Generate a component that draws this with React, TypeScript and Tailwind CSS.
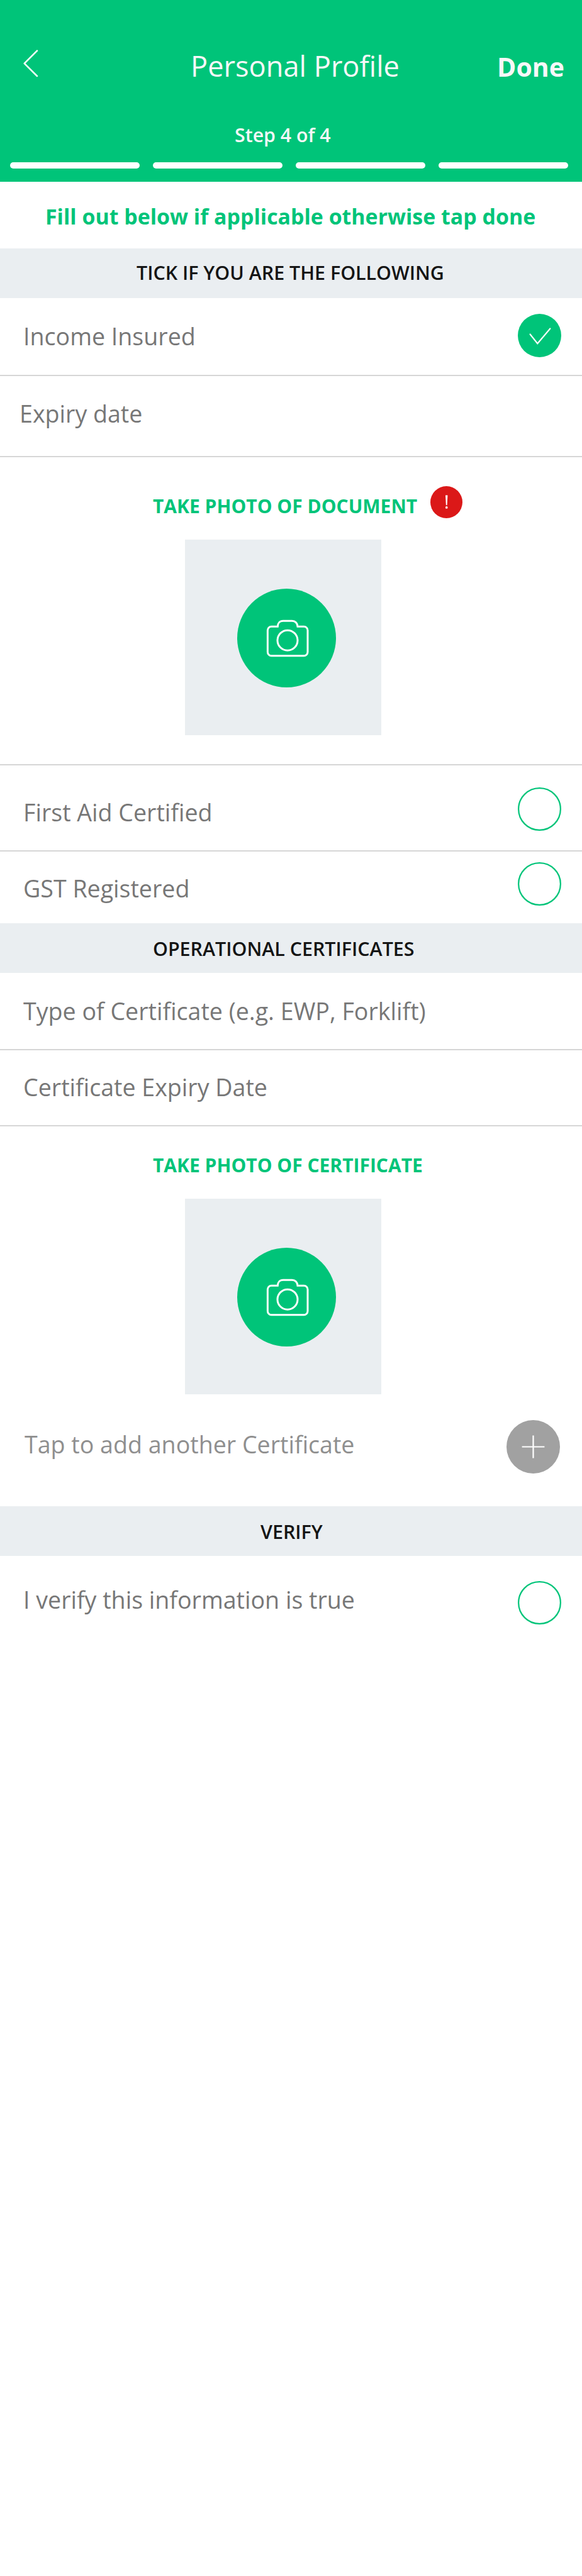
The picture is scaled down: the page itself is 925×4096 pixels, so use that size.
import React from "react";

const CameraIcon = () => (
  <svg className="h-[157px] w-[157px]" viewBox="0 0 211 211" fill="none">
    <circle cx="105.5" cy="105.5" r="105.5" fill="#00c479" />
    <g stroke="#fff" strokeWidth="4">
      <path d="M88 81H73a8 8 0 0 0-8 8V135.500a8 8 0 0 0 8 8H142.500a8 8 0 0 0 8-8V89a8 8 0 0 0-8-8H127.500M86.500 82.500V81C86.500 74 91 69 98 69H117C124 69 129 74 129 81V82.500" />
      <circle cx="107.500" cy="110.500" r="21.500" />
    </g>
  </svg>
);

const Radio = ({ checked = false }: { checked?: boolean }) => (
  <svg className="h-[69px] w-[69px] shrink-0" viewBox="0 0 92 92" fill="none">
    {checked ? (
      <>
        <circle cx="46" cy="46" r="46" fill="#00c479" />
        <path d="M26 43.300L41.700 63L68.500 31.300" stroke="#fff" strokeWidth="2.800" strokeLinecap="round" />
      </>
    ) : (
      <circle cx="46" cy="46" r="44.500" stroke="#00c479" strokeWidth="3" />
    )}
  </svg>
);

const SectionTitle = ({ children, pad }: { children: React.ReactNode; pad: string }) => (
  <h2 className={`h-[79px] shrink-0 bg-[#eaeef1] text-[30.4px] leading-[54px] font-semibold whitespace-nowrap text-[#151515] ${pad}`}>
    {children}
  </h2>
);

const PhotoBox = () => (
  <div className="ml-[294px] h-[311px] w-[312px] shrink-0 bg-[#eaeef1] pt-[78px] pl-[83px]">
    <CameraIcon />
  </div>
);

const row = "flex shrink-0 items-start justify-between pr-[33px] text-[37.6px] leading-[50px] text-[#777] whitespace-nowrap";
const line = "border-b-2 border-[#d6d6d6]";

export default function App() {
  return (
    <div className="flex h-[4096px] w-[925px] flex-col overflow-hidden bg-white font-['Open_Sans',sans-serif]">
      <header className="flex h-[289px] shrink-0 flex-col bg-[#00c479] text-[#f8f8f8]">
        <div className="flex h-[182px] shrink-0 items-start pt-[78px] pr-[28px] pl-[37px]">
          <svg className="h-[45px] w-[24px]" viewBox="0 0 32 60" fill="none">
            <path d="M29.300 3.600L2.300 30.600L29.300 57.300" stroke="#fff" strokeWidth="3.400" strokeLinecap="round" strokeLinejoin="round" />
          </svg>
          <h1 className="ml-[242px] pt-px text-[45.2px] leading-[52px] font-normal whitespace-nowrap">Personal Profile</h1>
          <span className="ml-auto pt-px text-[41px] leading-[55px] font-bold">Done</span>
        </div>
        <p className="h-[76px] pl-[373px] text-[30.3px] leading-[65px] font-semibold">Step 4 of 4</p>
        <div className="flex justify-between pr-[22px] pl-[16px]">
          <div className="h-[10px] w-[206px] rounded-[5px] bg-white" />
          <div className="h-[10px] w-[206px] rounded-[5px] bg-white" />
          <div className="h-[10px] w-[206px] rounded-[5px] bg-white" />
          <div className="h-[10px] w-[206px] rounded-[5px] bg-white" />
        </div>
      </header>
      <p className="h-[106px] shrink-0 pt-[28px] pl-[72px] text-[33.9px] leading-[54px] font-bold whitespace-nowrap text-[#00c479]">
        Fill out below if applicable otherwise tap done
      </p>
      <SectionTitle pad="pt-[12px] pl-[217px]">TICK IF YOU ARE THE FOLLOWING</SectionTitle>
      <div className={`h-[124px] pt-[25px] pl-[37px] ${row} ${line}`}>
        <span className="pt-[11px]">Income Insured</span>
        <Radio checked />
      </div>
      <div className={`h-[129px] pt-[35px] pl-[31px] ${row} ${line}`}>
        <span>Expiry date</span>
      </div>
      <div className={`flex h-[490px] shrink-0 flex-col ${line}`}>
        <div className="flex h-[131px] shrink-0 items-start gap-[21px] pt-[46px] pl-[243px] text-[30px] leading-[54px] font-bold whitespace-nowrap text-[#00c479]">
          <span className="pt-[5px]">TAKE PHOTO OF DOCUMENT</span>
          <svg className="h-[51px] w-[51px]" viewBox="0 0 68 68">
            <circle cx="34" cy="34" r="34" fill="#db1818" />
            <path d="M32 19.300h4.600l-1.200 21h-2.200z" fill="#fff" />
            <circle cx="34.300" cy="45.200" r="2.500" fill="#fff" />
          </svg>
        </div>
        <PhotoBox />
      </div>
      <div className={`h-[137px] pt-[35px] pl-[37px] ${row} ${line}`}>
        <span className="pt-[15px]">First Aid Certified</span>
        <Radio />
      </div>
      <div className={`h-[114px] pt-[17px] pl-[37px] ${row}`}>
        <span className="pt-[17px]">GST Registered</span>
        <Radio />
      </div>
      <SectionTitle pad="pt-[14px] pl-[243px]">OPERATIONAL CERTIFICATES</SectionTitle>
      <div className={`h-[123px] pt-[36px] pl-[37px] ${row} ${line}`}>
        <span>Type of Certificate (e.g. EWP, Forklift)</span>
      </div>
      <div className={`h-[121px] pt-[34px] pl-[37px] ${row} ${line}`}>
        <span>Certificate Expiry Date</span>
      </div>
      <p className="h-[115px] shrink-0 pt-[35px] pl-[243px] text-[30px] leading-[54px] font-bold whitespace-nowrap text-[#00c479]">
        TAKE PHOTO OF CERTIFICATE
      </p>
      <PhotoBox />
      <div className="flex h-[178px] shrink-0 items-start justify-between pt-[41px] pr-[35px] pl-[39px] text-[37.6px] leading-[50px] whitespace-nowrap text-[#8f8f8f]">
        <span className="pt-[14px]">Tap to add another Certificate</span>
        <svg className="h-[85px] w-[85px]" viewBox="0 0 114 114">
          <circle cx="57" cy="57" r="57" fill="#a1a1a1" />
          <path d="M33 57H81M57 33V81" stroke="#fff" strokeWidth="3" />
        </svg>
      </div>
      <SectionTitle pad="pt-[14px] pl-[414px]">VERIFY</SectionTitle>
      <div className={`pt-[40px] pl-[37px] ${row}`}>
        <span className="pt-[5px]">I verify this information is true</span>
        <Radio />
      </div>
    </div>
  );
}
